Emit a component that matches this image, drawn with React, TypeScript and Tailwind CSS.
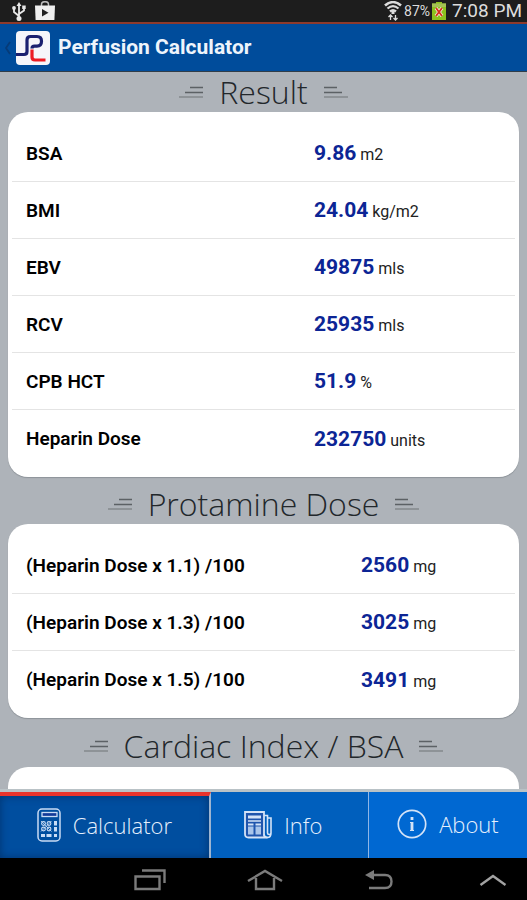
import React from 'react';

interface ResultRow {
  label: string;
  value: string;
  unit: string;
}

const results: ResultRow[] = [
  { label: 'BSA', value: '9.86', unit: 'm2' },
  { label: 'BMI', value: '24.04', unit: 'kg/m2' },
  { label: 'EBV', value: '49875', unit: 'mls' },
  { label: 'RCV', value: '25935', unit: 'mls' },
  { label: 'CPB HCT', value: '51.9', unit: '%' },
  { label: 'Heparin Dose', value: '232750', unit: 'units' },
];

const protamine: ResultRow[] = [
  { label: '(Heparin Dose x 1.1) /100', value: '2560', unit: 'mg' },
  { label: '(Heparin Dose x 1.3) /100', value: '3025', unit: 'mg' },
  { label: '(Heparin Dose x 1.5) /100', value: '3491', unit: 'mg' },
];

const HeadingLines: React.FC<{ className?: string }> = ({ className = '' }) => (
  <svg width="24" height="12" viewBox="0 0 24 12" fill="none" className={className} aria-hidden="true">
    <path d="M11 1.5h13M6 6.500h18" stroke="#5c6165" strokeWidth="1.7" />
    <path d="M0 11h24" stroke="#7d8286" strokeWidth="1.3" />
  </svg>
);

const SectionHeading: React.FC<{ title: string; className?: string }> = ({ title, className = '' }) => (
  <div className={`flex items-center justify-center gap-4 ${className}`}>
    <HeadingLines />
    <h2 className="font-['Open_Sans',sans-serif] text-[32px] leading-10 font-light text-[#22272b]">{title}</h2>
    <HeadingLines className="-scale-x-100" />
  </div>
);

const ResultCard: React.FC<{ rows: ResultRow[]; valueClass: string }> = ({ rows, valueClass }) => (
  <section className="mx-2 rounded-[20px] bg-white px-1 pt-3 pb-[11px] shadow-[0_1px_1px_#8d9399]">
    <table className="w-full table-fixed">
      <tbody>
        {rows.map((row) => (
          <tr key={row.label} className="h-[57px] border-b border-[#e4e4e4] last:border-b-0">
            <th scope="row" className="pt-[3px] pl-[14px] text-left text-[19px] font-semibold text-black">
              {row.label}
            </th>
            <td className={`pt-[3px] text-base whitespace-nowrap text-[#222] ${valueClass}`}>
              <span className="text-[21px] font-bold text-[#0c2595]">{row.value}</span> {row.unit}
            </td>
          </tr>
        ))}
      </tbody>
    </table>
  </section>
);

const StatusBar: React.FC = () => (
  <div className="flex h-6 shrink-0 items-center border-b-2 border-[#8e3a2c] bg-[#1d1d1d] px-[5px] text-[#dcdcdc]">
    <svg width="16" height="20" viewBox="0 0 16 20" fill="none" stroke="#e8e8e8" strokeWidth="1.8" className="ml-1.5">
      <path d="M8 17V4M8 15L3 11V7M8 13l5-3.500V6" />
      <path d="M8 1l2.500 4h-5z" fill="#e8e8e8" stroke="none" />
      <circle cx="8" cy="17.500" r="2.500" fill="#e8e8e8" stroke="none" />
      <circle cx="3" cy="7" r="1.900" fill="#e8e8e8" stroke="none" />
      <path d="M11.200 4.500h3.500v3.500h-3.500z" fill="#e8e8e8" stroke="none" />
    </svg>
    <svg width="20" height="20" viewBox="0 0 20 20" fill="none" className="ml-2">
      <path d="M6.500 5V3.500a3.500 2.800 0 0 1 7 0V5" stroke="#bdbdbd" strokeWidth="1.500" />
      <path d="M0 4.500h20l-.6 14.500H.6z" fill="#f0f0f0" />
      <path d="M7 8v7.500l6.500-3.700z" fill="#222" />
    </svg>
    <svg width="18" height="20" viewBox="0 0 18 20" fill="none" stroke="#dcdcdc" className="ml-auto">
      <path d="M1 4.500c5-4.500 11-4.500 16 0" strokeWidth="2.600" />
      <path d="M3.500 7.500c3.500-3 7.500-3 11 0M6 10.500c2-1.700 4-1.700 6 0" strokeWidth="2.300" />
      <path d="M9 10v3" strokeWidth="3" />
      <path d="M6.500 19v-5M4.500 16l2-2 2 2M11.500 14v5M9.500 17l2 2 2-2" strokeWidth="1.300" />
    </svg>
    <span className="ml-0.5 text-sm">87%</span>
    <svg width="14" height="18" viewBox="0 0 14 18" className="ml-0.5">
      <path d="M4 0h6v1.500h4V18H0V1.500h4z" fill="#8cc21d" />
      <path d="M0 1.500h14V5H0z" fill="#a5c254" />
      <path d="M4 6l6 8M10 6l-6 8" stroke="#f7f3e2" strokeWidth="3.400" />
      <path d="M4 6l6 8M10 6l-6 8" stroke="#d5331f" strokeWidth="2" />
    </svg>
    <span className="ml-1.5 text-[19px] leading-5">7:08 PM</span>
  </div>
);

const Header: React.FC = () => (
  <header className="flex h-12 shrink-0 items-center border-b border-[#303d49] bg-[#004c9b] pl-1">
    <button type="button" aria-label="Back" className="mr-1">
      <svg width="8" height="14" viewBox="0 0 8 14" fill="none">
        <path d="M6 1L2 7l4 6" stroke="#063b78" strokeWidth="1.800" />
      </svg>
    </button>
    <svg width="34" height="34" viewBox="0 0 34 34" fill="none" aria-hidden="true">
      <rect width="34" height="34" rx="4" fill="#f6f6fa" />
      <path d="M0 23.500h8q3 0 3-3V9q0-3.500 3.500-3.500H21q4.500 0 4.500 4.800t-4.500 4.800h-2.500q-2.500 0-2.500 2.400" stroke="#1b2170" strokeWidth="3.200" />
      <path d="M16 18.500V26q0 3 3 3h10.500" stroke="#ec1c24" strokeWidth="3.200" />
    </svg>
    <h1 className="ml-2 text-[21px] font-bold text-[#eef4fb]">Perfusion Calculator</h1>
  </header>
);

const CalculatorIcon: React.FC = () => (
  <svg width="24" height="34" viewBox="0 0 24 34" fill="none" stroke="#c9dcf5" aria-hidden="true">
    <rect x="1" y="1" width="22" height="32" rx="4" strokeWidth="1.500" />
    <rect x="5" y="4.500" width="15" height="4" fill="#123a98" strokeWidth="1.300" />
    <circle cx="6.500" cy="15.500" r="1.900" strokeWidth="1.100" />
    <circle cx="12" cy="15.500" r="1.900" strokeWidth="1.100" />
    <circle cx="6.500" cy="21" r="1.900" strokeWidth="1.100" />
    <circle cx="12" cy="21" r="1.900" strokeWidth="1.100" />
    <path d="M4 13l10.500 10.500M14.500 13L4 23.500" strokeWidth=".8" />
    <path d="M18.500 13v4.500M18.500 19v4.500M4 27.500h4M9.500 27.500h5M17 27.500h3" strokeWidth="3" />
  </svg>
);

const InfoIcon: React.FC = () => (
  <svg width="28" height="28" viewBox="0 0 28 28" fill="none" stroke="#d4e3f7" aria-hidden="true">
    <path d="M1 1h19v22q0 3.500 3.500 3.500H4.500Q1 26.500 1 23z" fill="#1f55ad" strokeWidth="1.800" />
    <path d="M20 4.500h3.500V22q0 1.500 1.700 1.500T27 22V7h-3.500M27 22q0 4.500-3.500 4.500T20 23" strokeWidth="1.600" />
    <path d="M4 6h13" strokeWidth="3" />
    <path d="M4 10h13" strokeWidth="1.500" />
    <path d="M4 13.500h5.500M11.500 13.500H17" strokeWidth="2" />
    <path d="M4 19.500h5.500M11.500 19.500H17" strokeWidth="8" stroke="#a9c5ea" />
  </svg>
);

const AboutIcon: React.FC = () => (
  <svg width="30" height="30" viewBox="0 0 30 30" fill="none" stroke="#d4e3f7" aria-hidden="true">
    <circle cx="15" cy="15" r="13.700" strokeWidth="1.700" />
    <path d="M15 8v3M15 13v9" strokeWidth="2.800" />
    <path d="M13 13.500h2M13 21.500h4" strokeWidth="1" />
  </svg>
);

const TabBar: React.FC = () => (
  <nav className="grid h-[69px] shrink-0 grid-cols-[4fr_3fr_3fr] border-t-[3px] border-[#b9c2c6] font-['Open_Sans',sans-serif] text-[22px] font-light text-[#e6f0fd]">
    <a href="#calculator" className="flex items-center justify-center gap-3 border-t-4 border-r-2 border-t-[#e8342c] border-r-[#9db5d1] bg-[#004e9f] pb-1 shadow-[inset_0_0_8px_#00336e]">
      <CalculatorIcon />
      Calculator
    </a>
    <a href="#info" className="flex items-center justify-center gap-3 border-r border-[#8fb6e6] bg-[#005fbd] pr-3">
      <InfoIcon />
      Info
    </a>
    <a href="#about" className="flex items-center justify-center gap-3 bg-[#0068d2] pb-0.5">
      <AboutIcon />
      About
    </a>
  </nav>
);

const SystemNav: React.FC = () => (
  <div className="flex h-[42px] shrink-0 items-center justify-end bg-black pt-0.5 pr-5">
    <button type="button" aria-label="Recent apps" className="mr-[81px]">
      <svg width="32" height="22" viewBox="0 0 32 22" fill="none" stroke="#7b7b7b" strokeWidth="2.400">
        <path d="M1.500 7.500h24v12.500h-24zM8 1.500h22.500V14" />
      </svg>
    </button>
    <button type="button" aria-label="Home" className="mr-[82px]">
      <svg width="36" height="22" viewBox="0 0 36 22" fill="none" stroke="#7b7b7b" strokeWidth="2.400">
        <path d="M1 12L18 2l17 10M9 9v11h18V9" />
      </svg>
    </button>
    <button type="button" aria-label="Back" className="mr-[86px]">
      <svg width="28" height="22" viewBox="0 0 28 22" fill="none" stroke="#7b7b7b" strokeWidth="2.400">
        <path d="M7 6h13q6.500 0 6.500 6.500T20 19H4" />
        <path d="M0 6l9-5v10z" fill="#7b7b7b" stroke="none" />
      </svg>
    </button>
    <button type="button" aria-label="Show menu">
      <svg width="28" height="12" viewBox="0 0 28 12" fill="none" stroke="#a2a2a2" strokeWidth="2.400">
        <path d="M1.500 11L14 2l12.500 9" />
      </svg>
    </button>
  </div>
);

const App: React.FC = () => {
  return (
    <div className="flex min-h-screen flex-col bg-[#aeb3b9] font-['Roboto',sans-serif]">
      <StatusBar />
      <Header />
      <main className="flex flex-1 flex-col">
        <SectionHeading title="Result" className="h-10 shrink-0" />
        <ResultCard rows={results} valueClass="w-[201px]" />
        <SectionHeading title="Protamine Dose" className="h-[47px] shrink-0 pt-1.5" />
        <ResultCard rows={protamine} valueClass="w-[154px]" />
        <SectionHeading title="Cardiac Index / BSA" className="h-[49px] shrink-0 pt-1.5" />
        <section className="mx-2 min-h-5 flex-1 rounded-t-[20px] bg-white" />
      </main>
      <TabBar />
      <SystemNav />
    </div>
  );
};

export default App;
